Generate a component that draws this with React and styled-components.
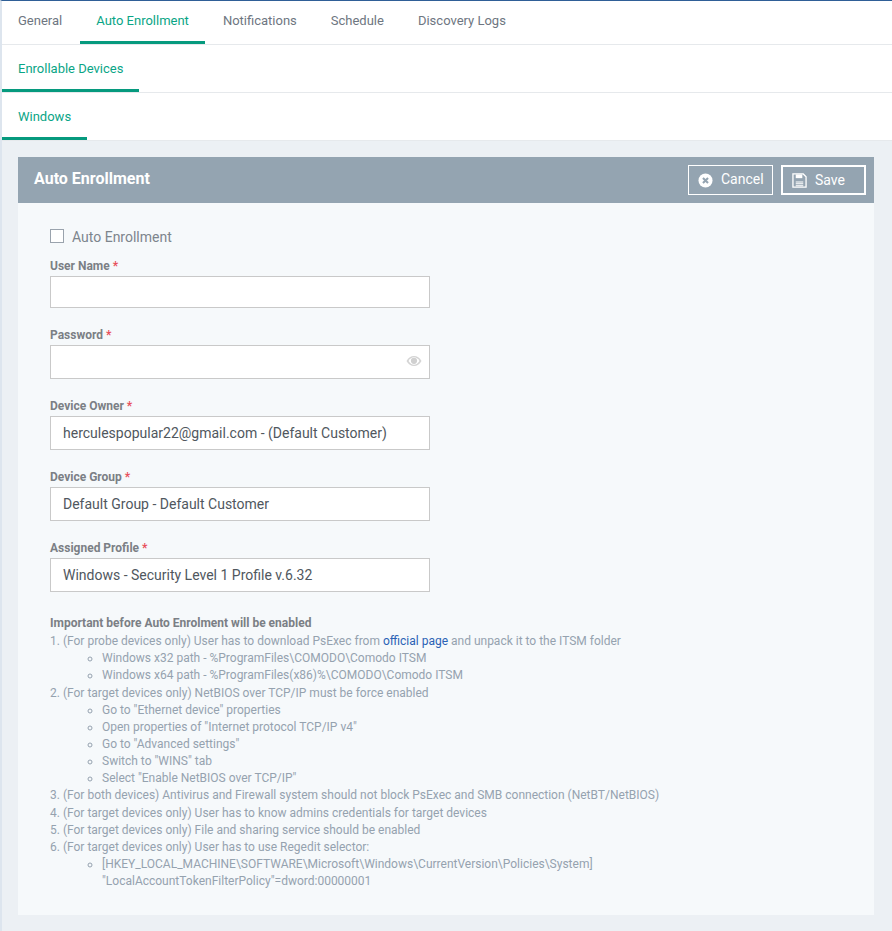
import React from "react";
import styled, { createGlobalStyle } from "styled-components";

const GlobalStyle = createGlobalStyle`
	* {
		box-sizing: border-box;
	}

	html,
	body {
		margin: 0;
		padding: 0;
		background: #ecf0f4;
		font-family: Roboto, "Liberation Sans", sans-serif;
	}
`;

const Page = styled.div`
	height: 931px;
	overflow: hidden;
	background: #ecf0f4;
	border-top: 1px solid #2f5f97;
	border-left: 2px solid #dde5ee;
`;

const TabRow = styled.div`
	display: flex;
	gap: 2px;
	height: ${(p) => p.$height}px;
	background: #fff;
	border-bottom: 1px solid #e6e9ec;
`;

const Tab = styled.div`
	padding: 0 16px;
	height: ${(p) => p.$height - 1}px;
	line-height: ${(p) => p.$lineHeight}px;
	font-size: 13px;
	color: ${(p) => (p.$active ? "#0aa586" : "#6e7681")};
	border-bottom: 3px solid ${(p) => (p.$active ? "#069a7e" : "transparent")};
`;

const Content = styled.div`
	padding: 16px 16px 0;
`;

const Panel = styled.div`
	width: 856px;
	height: 758px;
	background: #f6f9fb;
`;

const PanelHeader = styled.div`
	display: flex;
	align-items: center;
	justify-content: space-between;
	height: 46px;
	padding: 0 8px 0 16px;
	background: #94a4b1;
`;

const PanelTitle = styled.h2`
	margin: 0 0 3px;
	font-size: 16px;
	font-weight: 700;
	color: #fff;
`;

const Actions = styled.div`
	display: flex;
	gap: 8px;
`;

const ActionButton = styled.div`
	display: flex;
	align-items: center;
	gap: 8px;
	height: 30px;
	width: 85px;
	padding-left: 9px;
	font-size: 14px;
	color: #fff;
	border: ${(p) => (p.$primary ? 2 : 1)}px solid #fff;
`;

const ButtonText = styled.span`
	margin-bottom: ${(p) => (p.$primary ? 1 : 2)}px;
`;

const Form = styled.div`
	padding: 26px 32px 0;
`;

const CheckRow = styled.div`
	display: flex;
	align-items: center;
	gap: 8px;
	height: 16px;
	margin-bottom: 14px;
	font-size: 14px;
	color: #7d858d;
`;

const CheckBox = styled.span`
	align-self: flex-start;
	width: 14px;
	height: 14px;
	background: #fff;
	border: 1px solid #9aa3ad;
`;

const Field = styled.div`
	width: 380px;
	margin-bottom: ${(p) => p.$gap}px;
`;

const Label = styled.div`
	height: 17px;
	line-height: 15px;
	font-size: 12px;
	font-weight: 700;
	color: #7b7f85;
`;

const Required = styled.span`
	color: #e8505b;
`;

const InputBox = styled.div`
	position: relative;
	height: ${(p) => p.$height}px;
	padding: 0 12px;
	line-height: ${(p) => p.$height - 2}px;
	font-size: 14px;
	color: #50575e;
	background: #fff;
	border: 1px solid #c9c9c9;
`;

const EyeIcon = styled.svg`
	position: absolute;
	right: 7px;
	top: 8px;
`;

const Notes = styled.div`
	margin-top: 23px;
	font-size: 12px;
	line-height: 17.14px;
	color: #95a2af;
`;

const NotesTitle = styled.div`
	margin-bottom: 1px;
	font-weight: 700;
	color: #7b7f85;
`;

const SubList = styled.ul`
	margin: 0;
	padding: 0 0 0 52px;
	list-style: circle;
`;

const Link = styled.a`
	color: #2a62b5;
	text-decoration: none;
`;

function CancelIcon() {
	return (
		<svg width="15" height="15" viewBox="0 0 16 16">
			<circle cx="8" cy="8" r="7.5" fill="#fff" />
			<path d="M5.3 5.3l5.4 5.4M10.7 5.3l-5.4 5.4" stroke="#94a4b1" strokeWidth="2.2" />
		</svg>
	);
}

function SaveIcon() {
	return (
		<svg width="15" height="15" viewBox="0 0 16 16" fill="none" stroke="#fff">
			<path d="M1 1h11l3 3v11H1z" strokeWidth="1.4" />
			<path d="M4 1.5h7v4H4z" fill="#fff" stroke="none" />
			<path d="M4 9.5h8M4 11.5h8M4 13.5h8" strokeWidth="1.1" />
		</svg>
	);
}

function Eye() {
	return (
		<EyeIcon width="16" height="14" viewBox="0 0 16 14">
			<path d="M.5 7C2.4 3.6 5 2 8 2s5.6 1.6 7.500 5c-1.900 3.400-4.500 5-7.500 5S2.400 10.400.500 7z" fill="#d4d4d4" />
			<path d="M2.500 7C4 9.400 5.800 10.700 8 10.700s4-1.300 5.500-3.700C12 4.600 10.200 3.300 8 3.300S4 4.600 2.500 7z" fill="#fff" />
			<circle cx="8" cy="6.800" r="3.100" fill="#d0d0d0" />
		</EyeIcon>
	);
}

const fields = [
	{ label: "User Name", height: 32, gap: 20 },
	{ label: "Password", height: 34, gap: 20, eye: true },
	{ label: "Device Owner", value: "herculespopular22@gmail.com - (Default Customer)", height: 34, gap: 20 },
	{ label: "Device Group", value: "Default Group - Default Customer", height: 34, gap: 20 },
	{ label: "Assigned Profile", value: "Windows - Security Level 1 Profile v.6.32", height: 34, gap: 0 },
];

function App() {
	return (
		<Page>
			<GlobalStyle />
			<TabRow $height={44}>
				<Tab $height={44} $lineHeight={39}>General</Tab>
				<Tab $height={44} $lineHeight={39} $active>Auto Enrollment</Tab>
				<Tab $height={44} $lineHeight={39}>Notifications</Tab>
				<Tab $height={44} $lineHeight={39}>Schedule</Tab>
				<Tab $height={44} $lineHeight={39}>Discovery Logs</Tab>
			</TabRow>
			<TabRow $height={48}>
				<Tab $height={48} $lineHeight={47} $active>Enrollable Devices</Tab>
			</TabRow>
			<TabRow $height={48}>
				<Tab $height={48} $lineHeight={47} $active>Windows</Tab>
			</TabRow>
			<Content>
				<Panel>
					<PanelHeader>
						<PanelTitle>Auto Enrollment</PanelTitle>
						<Actions>
							<ActionButton>
								<CancelIcon />
								<ButtonText>Cancel</ButtonText>
							</ActionButton>
							<ActionButton $primary>
								<SaveIcon />
								<ButtonText $primary>Save</ButtonText>
							</ActionButton>
						</Actions>
					</PanelHeader>
					<Form>
						<CheckRow>
							<CheckBox />
							Auto Enrollment
						</CheckRow>
						{fields.map((f) => (
							<Field key={f.label} $gap={f.gap}>
								<Label>
									{f.label} <Required>*</Required>
								</Label>
								<InputBox $height={f.height}>
									{f.value}
									{f.eye && <Eye />}
								</InputBox>
							</Field>
						))}
						<Notes>
							<NotesTitle>Important before Auto Enrolment will be enabled</NotesTitle>
							<div>
								1. (For probe devices only) User has to download PsExec from <Link>official page</Link> and unpack it to the ITSM folder
							</div>
							<SubList>
								<li>Windows x32 path - %ProgramFiles\COMODO\Comodo ITSM</li>
								<li>Windows x64 path - %ProgramFiles(x86)%\COMODO\Comodo ITSM</li>
							</SubList>
							<div>2. (For target devices only) NetBIOS over TCP/IP must be force enabled</div>
							<SubList>
								<li>Go to "Ethernet device" properties</li>
								<li>Open properties of "Internet protocol TCP/IP v4"</li>
								<li>Go to "Advanced settings"</li>
								<li>Switch to "WINS" tab</li>
								<li>Select "Enable NetBIOS over TCP/IP"</li>
							</SubList>
							<div>3. (For both devices) Antivirus and Firewall system should not block PsExec and SMB connection (NetBT/NetBIOS)</div>
							<div>4. (For target devices only) User has to know admins credentials for target devices</div>
							<div>5. (For target devices only) File and sharing service should be enabled</div>
							<div>6. (For target devices only) User has to use Regedit selector:</div>
							<SubList>
								<li>
									[HKEY_LOCAL_MACHINE\SOFTWARE\Microsoft\Windows\CurrentVersion\Policies\System]
									<br />
									"LocalAccountTokenFilterPolicy"=dword:00000001
								</li>
							</SubList>
						</Notes>
					</Form>
				</Panel>
			</Content>
		</Page>
	);
}

export default App;
